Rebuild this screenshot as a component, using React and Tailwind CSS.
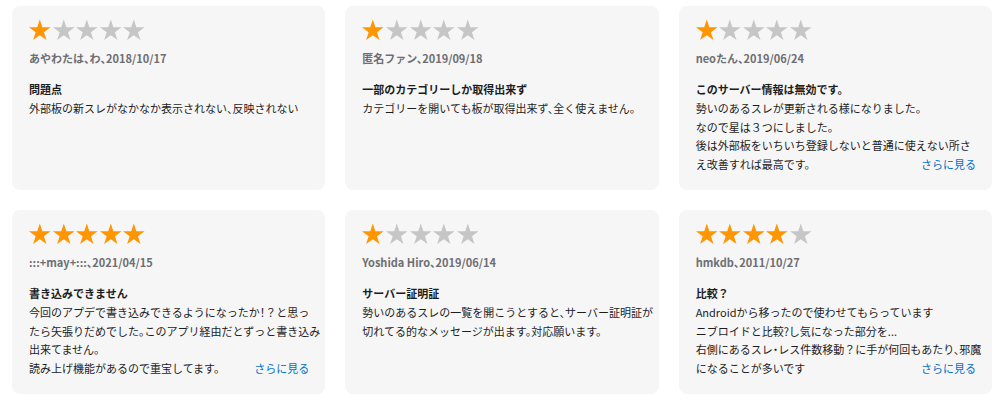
import React from "react";

const reviews = [
  {
    stars: 1,
    name: "あやわたは、わ、2018/10/17",
    title: "問題点",
    lines: ["外部板の新スレがなかなか表示されない、反映されない"],
    more: false,
  },
  {
    stars: 1,
    name: "匿名ファン、2019/09/18",
    title: "一部のカテゴリーしか取得出来ず",
    lines: ["カテゴリーを開いても板が取得出来ず、全く使えません。"],
    more: false,
  },
  {
    stars: 1,
    name: "neoたん、2019/06/24",
    title: "このサーバー情報は無効です。",
    lines: [
      "勢いのあるスレが更新される様になりました。",
      "なので星は３つにしました。",
      "後は外部板をいちいち登録しないと普通に使えない所さ",
      "え改善すれば最高です。",
    ],
    more: true,
  },
  {
    stars: 5,
    name: ":::+may+:::、2021/04/15",
    title: "書き込みできません",
    lines: [
      "今回のアプデで書き込みできるようになったか！？と思っ",
      "たら矢張りだめでした。このアプリ経由だとずっと書き込み",
      "出来てません。",
      "読み上げ機能があるので重宝してます。",
    ],
    more: true,
  },
  {
    stars: 1,
    name: "Yoshida Hiro、2019/06/14",
    title: "サーバー証明証",
    lines: [
      "勢いのあるスレの一覧を開こうとすると、サーバー証明証が",
      "切れてる的なメッセージが出ます。対応願います。",
    ],
    more: false,
  },
  {
    stars: 4,
    name: "hmkdb、2011/10/27",
    title: "比較？",
    lines: [
      "Androidから移ったので使わせてもらっています",
      "ニブロイドと比較?し気になった部分を...",
      "右側にあるスレ・レス件数移動？に手が何回もあたり、邪魔",
      "になることが多いです",
    ],
    more: true,
  },
];

function Star({ filled }) {
  return (
    <svg viewBox="0 0 24 24" className="w-[23.6px] h-[23.6px] shrink-0">
      <polygon
        points="12,1.5 14.6,9.49 23,9.5 16.2,14.44 18.8,22.43 12,17.49 5.2,22.43 7.8,14.44 1,9.5 9.4,9.49"
        fill={filled ? "#ff9500" : "#c6c6c6"}
      />
    </svg>
  );
}

function Card({ r }) {
  return (
    <div className="h-[184px] rounded-[8px] bg-[#f6f6f6] pl-[17px] pr-[16px] pt-[12px] flex flex-col [font-feature-settings:'halt']">
      <div className="flex ml-[-1px]">
        {[0, 1, 2, 3, 4].map((i) => (
          <Star key={i} filled={i < r.stars} />
        ))}
      </div>
      <div className="mt-[7px] text-[11px] leading-[18.67px] font-semibold text-[#6e6e73] whitespace-nowrap">
        {r.name}
      </div>
      <div className="mt-[13px] text-[11px] leading-[18.67px] font-bold text-[#1d1d1f] whitespace-nowrap">
        {r.title}
      </div>
      <div className="text-[11px] leading-[18.67px] text-[#1d1d1f]">
        {r.lines.map((l, i) => {
          const last = i === r.lines.length - 1;
          if (last && r.more) {
            return (
              <div key={i} className="flex justify-between whitespace-nowrap">
                <span>{l}</span>
                <span className="text-[#0070c9]">さらに見る</span>
              </div>
            );
          }
          return (
            <div key={i} className="whitespace-nowrap">
              {l}
            </div>
          );
        })}
      </div>
    </div>
  );
}

export default function App() {
  return (
    <div
      className="w-[1000px] h-[400px] bg-white pt-[6px] pl-[12px] pr-[8px] grid grid-cols-3 gap-[20px] content-start"
      style={{ fontFamily: '"Noto Sans CJK JP", "Noto Sans", sans-serif' }}
    >
      {reviews.map((r, i) => (
        <Card key={i} r={r} />
      ))}
    </div>
  );
}
